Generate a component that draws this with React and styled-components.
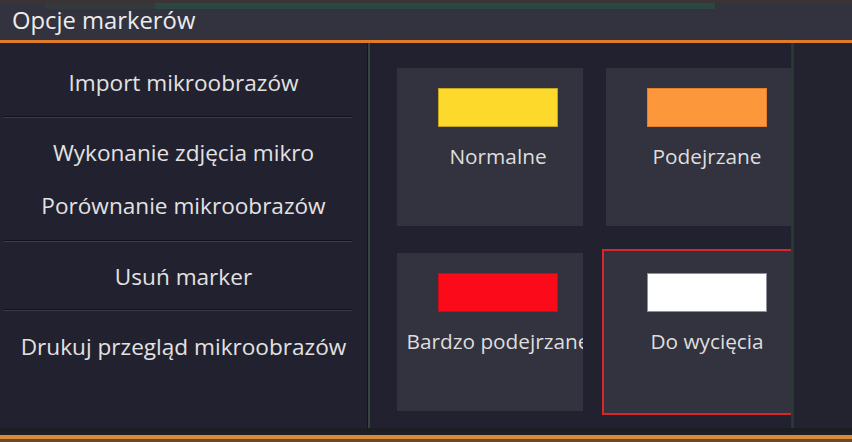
import React from 'react'
import styled, { createGlobalStyle } from 'styled-components'

const GlobalStyle = createGlobalStyle`
  html, body {
    margin: 0;
    padding: 0;
    background: #22212f;
  }
  body {
    font-family: "Open Sans", "Noto Sans", sans-serif;
    color: #e4e4e4;
  }
`

const menuGroups = [
    { top: 5, bottom: 0, items: [{ label: 'Import mikroobrazów', height: 68 }] },
    { top: 8, bottom: 8, items: [
        { label: 'Wykonanie zdjęcia mikro', height: 53 },
        { label: 'Porównanie mikroobrazów', height: 53 },
    ] },
    { top: 1, bottom: 0, items: [{ label: 'Usuń marker', height: 66 }] },
    { top: 0, bottom: 0, items: [{ label: 'Drukuj przegląd mikroobrazów', height: 70 }] },
]

const markers = [
    { label: 'Normalne', color: '#fdd92b', edge: '#c4a61e' },
    { label: 'Podejrzane', color: '#fd973c', edge: '#e2802c' },
    { label: 'Bardzo podejrzane', color: '#fb0a19', edge: '#c90c17' },
    { label: 'Do wycięcia', color: '#ffffff', edge: '#8e8e9c', selected: true },
]

function App() {
    return (
        <Window>
            <GlobalStyle />
            <TitleBar>
                <Backdrop>
                    <BackdropGap />
                    <BackdropStripe />
                </Backdrop>
                <Title>Opcje markerów</Title>
            </TitleBar>
            <Body>
                <Menu>
                    {menuGroups.map((group, gi) => (
                        <React.Fragment key={gi}>
                            {gi > 0 && <Separator />}
                            <Group $top={group.top} $bottom={group.bottom}>
                                {group.items.map((item) => (
                                    <MenuItem key={item.label} $height={item.height}>
                                        {item.label}
                                    </MenuItem>
                                ))}
                            </Group>
                        </React.Fragment>
                    ))}
                </Menu>
                <Markers>
                    <Grid>
                        {markers.map((m) => (
                            <Card key={m.label} $selected={m.selected}>
                                <CardInner>
                                    <Swatch $color={m.color} $edge={m.edge} />
                                    <Label>{m.label}</Label>
                                </CardInner>
                            </Card>
                        ))}
                    </Grid>
                </Markers>
                <Spare />
            </Body>
            <Footer />
        </Window>
    )
}

export default App

const Window = styled.div`
  width: 852px;
  height: 442px;
  display: flex;
  flex-direction: column;
  background: #22212f;
  overflow: hidden;
`

const TitleBar = styled.header`
  height: 40px;
  background: #33323f;
  border-bottom: 3px solid #e07b2a;
  display: flex;
  flex-direction: column;
`

const Backdrop = styled.div`
  height: 10px;
  display: flex;
  border-top: 3px solid #3a3435;
  box-sizing: border-box;
`

const BackdropGap = styled.div`
  width: 110px;
  margin-left: 45px;
  background: #333a3c;
`

const BackdropStripe = styled.div`
  width: 560px;
  background: #2b4643;
`

const Title = styled.h1`
  margin: 0;
  padding: 0 0 7px 12px;
  flex: 1;
  display: flex;
  align-items: center;
  font-size: 23.8px;
  font-weight: 400;
  color: #ececec;
  line-height: 1;
`

const Body = styled.main`
  flex: 1;
  display: flex;
  min-height: 0;
`

const Menu = styled.nav`
  width: 367px;
  flex-shrink: 0;
  display: flex;
  flex-direction: column;
  border-right: 1px solid #15151e;
`

const Group = styled.div`
  padding-top: ${(p) => p.$top}px;
  padding-bottom: ${(p) => p.$bottom}px;
  display: flex;
  flex-direction: column;
`

const MenuItem = styled.div`
  height: ${(p) => p.$height}px;
  display: flex;
  align-items: center;
  justify-content: center;
  font-size: 22.6px;
  color: #e2e2e2;
  white-space: nowrap;
`

const Separator = styled.hr`
  margin: 0 0 0 3px;
  width: 349px;
  height: 0;
  border: 0;
  border-top: 1px solid #13131b;
  border-bottom: 1px solid #3b3b49;
`

const Markers = styled.section`
  width: 421px;
  flex-shrink: 0;
  border-left: 2px solid #38453f;
  border-right: 3px solid #2a3835;
  overflow: hidden;
`

const Grid = styled.div`
  display: grid;
  grid-template-columns: 186px 186px;
  column-gap: 23px;
  row-gap: 27px;
  padding: 25px 0 0 27px;
`

const Card = styled.div`
  height: 158px;
  background: #33323f;
  overflow: hidden;
  box-shadow: ${(p) => (p.$selected ? '0 0 0 2px #33323f, 0 0 0 4px #d6282b' : 'none')};
`

const CardInner = styled.div`
  width: 202px;
  padding-top: 20px;
  display: flex;
  flex-direction: column;
  align-items: center;
`

const Swatch = styled.div`
  width: 120px;
  height: 39px;
  box-sizing: border-box;
  background: ${(p) => p.$color};
  border: 1px solid ${(p) => p.$edge};
`

const Label = styled.div`
  margin-top: 15px;
  font-size: 20.8px;
  line-height: 28px;
  color: #dedede;
  white-space: nowrap;
`

const Spare = styled.div`
  flex: 1;
  background: #23222f;
`

const Footer = styled.footer`
  height: 14px;
  flex-shrink: 0;
  background: #1f2026;
  border-top: 4px solid #1c1e22;
  border-bottom: 3px solid #6b4a2c;
  box-sizing: border-box;
  box-shadow: inset 0 -4px 0 #d98a3a;
`
